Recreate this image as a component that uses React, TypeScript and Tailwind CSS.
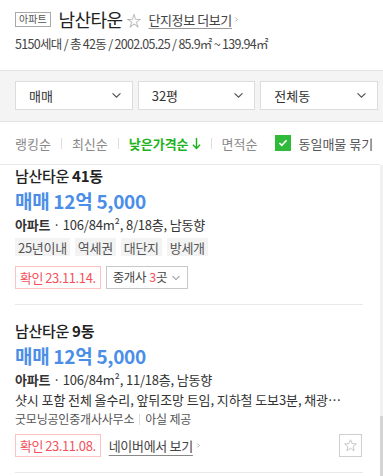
import React from 'react';

const FONT = { fontFamily: '"Noto Sans CJK KR", "Noto Sans", "Liberation Sans", sans-serif' };

const Chevron = ({ className = '' }: { className?: string }) => (
  <svg viewBox="0 0 12 8" className={className} fill="none" stroke="currentColor" strokeWidth="1.4">
    <path d="M1.5 1.5 L6 6 L10.5 1.5" />
  </svg>
);

const StarOutline = ({ className = '' }: { className?: string }) => (
  <svg viewBox="0 0 24 24" className={className} fill="none" stroke="currentColor" strokeWidth="1.3" strokeLinejoin="round">
    <path d="M12 2.8 L14.7 9 L21.3 9.4 L16.2 13.7 L17.8 20.2 L12 16.6 L6.2 20.2 L7.8 13.7 L2.7 9.4 L9.3 9 Z" />
  </svg>
);

const Select = ({ label }: { label: string }) => (
  <div className="flex-1 h-[29px] bg-white border border-[#dcdcdc] flex items-center justify-between pl-[13px] pr-[10px]">
    <span className="text-[13px] text-[#333] leading-none">{label}</span>
    <Chevron className="w-[11px] h-[7px] text-[#555]" />
  </div>
);

const Sep = () => <span className="block w-px h-[11px] bg-[#dedede]" />;

const ConfirmBadge = ({ date }: { date: string }) => (
  <span className="h-[23px] px-[4px] flex items-center border border-[#ffc2c2] text-[#f4505a] text-[13px] leading-none tracking-[-0.4px]">
    확인<span className="ml-[2px]">{date}</span>
  </span>
);

const Listing = ({
  dong,
  floor,
  children,
}: {
  dong: string;
  floor: string;
  children: React.ReactNode;
}) => (
  <div className="pr-[17px] pl-[15px]">
    <div className="text-[15px] text-[#222] leading-[18px] tracking-[-0.3px]">
      <span className="font-medium">남산타운 </span>
      <span className="font-bold">{dong}</span>
    </div>
    <div className="mt-[5px] text-[19px] font-bold text-[#4b8ee8] leading-[22px] tracking-[-0.3px]">매매 12억 5,000</div>
    <div className="mt-[5px] text-[13px] text-[#333] leading-[16px] tracking-[-0.2px]">
      <span className="font-bold">아파트</span> · 106/84m², {floor}, 남동향
    </div>
    {children}
  </div>
);

export default function App() {
  return (
    <div className="w-[383px] h-[476px] bg-white overflow-hidden flex flex-col" style={FONT}>
      {/* header */}
      <div className="px-[15px] pt-[7px] h-[70px]">
        <div className="flex items-center h-[24px]">
          <span className="h-[15px] px-[3px] border border-[#a9a9a9] text-[10px] text-[#555] leading-none flex items-center">아파트</span>
          <span className="ml-[8px] text-[18px] text-[#222] tracking-[-0.6px] leading-none">남산타운</span>
          <span className="ml-[4px] text-[15px] text-[#999] leading-none">☆</span>
          <span className="ml-[7px] text-[13px] text-[#444] underline underline-offset-[3px] decoration-[#999] leading-none flex items-center tracking-[-0.4px]">
            단지정보 더보기
            <Chevron className="w-[5px] h-[9px] ml-[2px] -rotate-90 text-[#777]" />
          </span>
        </div>
        <div className="mt-[5px] text-[12.5px] text-[#444] leading-[16px] tracking-[-0.7px]">
          5150세대 / 총 42동 / 2002.05.25 / 85.9㎡ ~ 139.94㎡
        </div>
      </div>

      {/* filters */}
      <div className="h-[52px] bg-[#f4f4f4] border-t border-b border-[#e3e3e3] pt-[10px] pl-[15px] pr-[5px] flex gap-[5px] items-start">
        <Select label="매매" />
        <Select label="32평" />
        <Select label="전체동" />
      </div>

      {/* sort */}
      <div className="h-[43px] flex items-center pl-[15px] text-[13px] text-[#888] leading-none border-b border-[#e8e8e8] mr-[3px]">
        <span>랭킹순</span>
        <span className="mx-[10px]"><Sep /></span>
        <span>최신순</span>
        <span className="mx-[10px]"><Sep /></span>
        <span className="text-[#1eb31e] font-bold flex items-center">
          낮은가격순
          <svg viewBox="0 0 10 14" className="w-[9px] h-[13px] ml-[3px]" fill="none" stroke="currentColor" strokeWidth="1.6">
            <path d="M5 1 V12.5 M1 8.5 L5 12.5 L9 8.5" />
          </svg>
        </span>
        <span className="mx-[10px]"><Sep /></span>
        <span>면적순</span>
        <span className="ml-[18px] w-[16px] h-[16px] bg-[#2fba3a] flex items-center justify-center">
          <svg viewBox="0 0 12 10" className="w-[10px] h-[8px]" fill="none" stroke="white" strokeWidth="2">
            <path d="M1.5 5 L4.5 8 L10.5 1.5" />
          </svg>
        </span>
        <span className="ml-[7px] text-[#555]">동일매물 묶기</span>
      </div>

      {/* list */}
      <div className="flex-1 flex min-h-0">
        <div className="flex-1 pt-[2px] overflow-hidden">
          <Listing dong="41동" floor="8/18층">
            <div className="mt-[5px] flex gap-[5px] text-[13px] text-[#555] leading-none tracking-[-0.3px]">
              {['25년이내', '역세권', '대단지', '방세개'].map((t) => (
                <span key={t} className="h-[18px] px-[3px] bg-[#f3f3f3] flex items-center">{t}</span>
              ))}
            </div>
            <div className="mt-[10px] flex gap-[5px]">
              <ConfirmBadge date="23.11.14." />
              <span className="h-[23px] px-[6px] flex items-center border border-[#c9c9c9] text-[12.5px] text-[#444] leading-none tracking-[-0.3px]">
                중개사 <span className="text-[#f4505a] ml-[3px]">3</span>곳
                <Chevron className="w-[10px] h-[6px] ml-[4px] text-[#999]" />
              </span>
            </div>
            <div className="mt-[15px] h-px bg-[#e8e8e8]" />
          </Listing>

          <div className="h-[17px]" />
          <Listing dong="9동" floor="11/18층">
            <div className="mt-[3px] text-[13px] text-[#333] leading-[17px] whitespace-nowrap tracking-[-0.1px]">
              샷시 포함 전체 올수리, 앞뒤조망 트임, 지하철 도보3분, 채광…
            </div>
            <div className="mt-[5px] flex items-center text-[12px] text-[#555] leading-none tracking-[-0.2px]">
              <span>굿모닝공인중개사사무소</span>
              <span className="mx-[5px]"><Sep /></span>
              <span>아실 제공</span>
            </div>
            <div className="mt-[9px] flex items-center">
              <ConfirmBadge date="23.11.08." />
              <span className="ml-[8px] text-[13px] text-[#444] leading-none underline underline-offset-[4px] decoration-[#888] flex items-center tracking-[-0.3px]">
                네이버에서 보기
                <Chevron className="w-[5px] h-[9px] ml-[3px] -rotate-90 text-[#777]" />
              </span>
              <span className="ml-auto mr-[1px] w-[23px] h-[23px] border border-[#cfcfcf] flex items-center justify-center">
                <StarOutline className="w-[15px] h-[15px] text-[#bbb]" />
              </span>
            </div>
            <div className="mt-[15px] h-px bg-[#e8e8e8]" />
          </Listing>
        </div>
        <div className="w-[3px] bg-[#f1f1f1] flex flex-col justify-end">
          <div className="h-[60px] bg-[#d4d4d4]" />
        </div>
      </div>
    </div>
  );
}
